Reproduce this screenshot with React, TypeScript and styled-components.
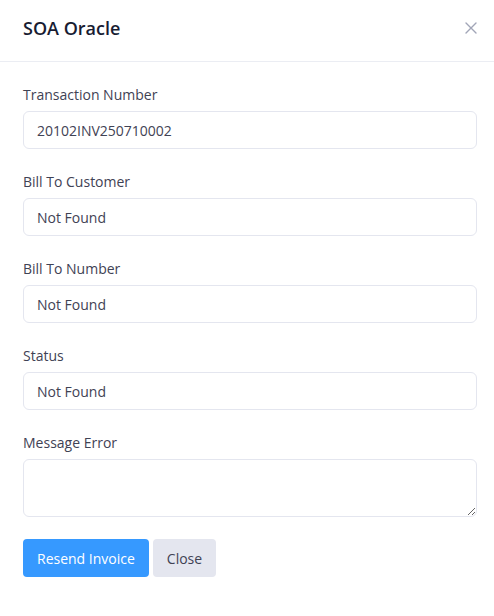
import React from "react";
import styled, {createGlobalStyle} from "styled-components";

const GlobalStyle = createGlobalStyle`
  html, body {
    margin: 0;
    padding: 0;
    background: #ffffff;
  }
  body {
    font-family: "Open Sans", "Liberation Sans", sans-serif;
  }
`

const fields = [
    {label: "Transaction Number", value: "20102INV250710002"},
    {label: "Bill To Customer", value: "Not Found"},
    {label: "Bill To Number", value: "Not Found"},
    {label: "Status", value: "Not Found"},
]

export default function App() {
    return (
        <>
            <GlobalStyle/>
            <Modal>
                <Header>
                    <Title>SOA Oracle</Title>
                    <CloseIcon aria-label="close">
                        <svg width="12" height="12" viewBox="0 0 12 12">
                            <path d="M1 1L11 11M11 1L1 11" stroke="#a1a5b7" strokeWidth="1.4" strokeLinecap="round"/>
                        </svg>
                    </CloseIcon>
                </Header>
                <Body>
                    {fields.map(f => (
                        <FormGroup key={f.label}>
                            <Label>{f.label}</Label>
                            <Input readOnly value={f.value}/>
                        </FormGroup>
                    ))}
                    <FormGroup>
                        <Label>Message Error</Label>
                        <TextArea readOnly/>
                    </FormGroup>
                    <ButtonGroup>
                        <Button $primary>Resend Invoice</Button>
                        <Button>Close</Button>
                    </ButtonGroup>
                </Body>
            </Modal>
        </>
    )
}

const Modal = styled.div`
  width: 494px;
  min-height: 616px;
  background: #ffffff;
  box-sizing: border-box;
`
const Header = styled.div`
  height: 62px;
  box-sizing: border-box;
  display: flex;
  align-items: center;
  justify-content: space-between;
  padding: 0 17px 6px 23px;
  border-bottom: 1px solid #ebedf3;
`
const Title = styled.h3`
  margin: 0;
  font-size: 18px;
  font-weight: 600;
  color: #181c32;
`
const CloseIcon = styled.button`
  border: none;
  background: none;
  padding: 0;
  display: flex;
  cursor: pointer;
`
const Body = styled.div`
  padding: 22px 17px 0 23px;
`
const FormGroup = styled.div`
  display: flex;
  flex-direction: column;
  margin-bottom: 22px;
`
const Label = styled.label`
  font-size: 14px;
  line-height: 21px;
  color: #3f4254;
  margin-bottom: 6px;
`
const Input = styled.input`
  height: 38px;
  box-sizing: border-box;
  border: 1px solid #e4e6ef;
  border-radius: 6px;
  padding: 0 13px;
  font-family: inherit;
  font-size: 14px;
  color: #3f4254;
  outline: none;
`
const TextArea = styled.textarea`
  height: 58px;
  box-sizing: border-box;
  border: 1px solid #e4e6ef;
  border-radius: 6px;
  padding: 8px 13px;
  font-family: inherit;
  font-size: 14px;
  outline: none;
`
const ButtonGroup = styled.div`
  display: flex;
  gap: 4px;
  margin-top: 1px;
`
const Button = styled.button<{ $primary?: boolean }>`
  height: 38px;
  padding: 0 14px;
  border: none;
  border-radius: 4px;
  font-family: inherit;
  font-size: 14px;
  font-weight: 500;
  color: ${p => p.$primary ? "#ffffff" : "#3f4254"};
  background: ${p => p.$primary ? "#3699ff" : "#e4e6ef"};
  cursor: pointer;
`
